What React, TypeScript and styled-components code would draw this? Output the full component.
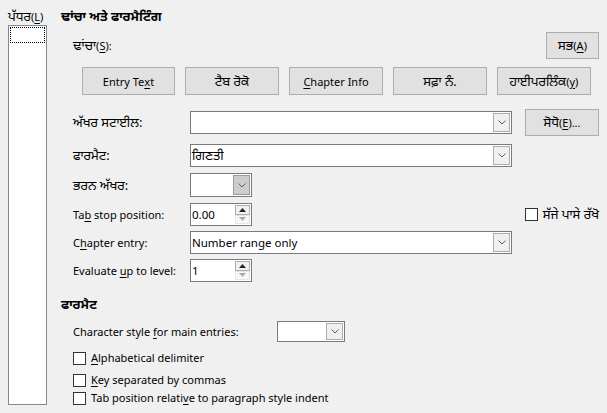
import React from "react";
import styled, { createGlobalStyle } from "styled-components";

const Global = createGlobalStyle`
  html, body { margin: 0; padding: 0; }
  body {
    background: #f0f0f0;
    font-family: "Noto Sans", "Noto Sans Gurmukhi", "Open Sans", sans-serif;
    font-size: 11px;
    color: #000;
  }
  u { text-underline-offset: 2px; }
`;

const Pa = styled.span`
  font-size: 13px;
`;

const Page = styled.div`
  width: 607px;
  height: 413px;
  display: flex;
  background: #f0f0f0;
  overflow: hidden;
`;

const LeftCol = styled.div`
  margin-left: 8px;
  width: 39px;
  display: flex;
  flex-direction: column;
`;

const Label = styled.div<{ $w?: number }>`
  line-height: 16px;
  white-space: nowrap;
  ${(p) => (p.$w ? `width: ${p.$w}px; flex: none;` : "")}
`;

const TopLabel = styled(Label)`
  margin-top: 8px;
`;

const ListBox = styled.div`
  height: 380px;
  background: #fff;
  border: 1px solid #828790;
  box-sizing: border-box;
  padding: 1px;
`;

const FocusItem = styled.div`
  height: 14px;
  border: 1px dotted #000;
`;

const MainCol = styled.div`
  margin-left: 14px;
  width: 538px;
  display: flex;
  flex-direction: column;
`;

const SectionTitle = styled.div<{ $top: number }>`
  margin-top: ${(p) => p.$top}px;
  font-weight: bold;
  line-height: 16px;
`;

const Row = styled.div<{ $top: number; $indent?: number; $h?: number }>`
  margin-top: ${(p) => p.$top}px;
  padding-left: ${(p) => p.$indent ?? 12}px;
  height: ${(p) => p.$h ?? 23}px;
  display: flex;
  align-items: center;
`;

const Spacer = styled.div`
  flex: 1;
`;

const Button = styled.div<{ $w: number; $h?: number }>`
  width: ${(p) => p.$w}px;
  height: ${(p) => p.$h ?? 28}px;
  box-sizing: border-box;
  background: #e1e1e1;
  border: 1px solid #adadad;
  display: flex;
  align-items: center;
  justify-content: center;
  white-space: nowrap;
  flex: none;
`;

const ButtonRow = styled.div`
  margin-top: 8px;
  padding-left: 21px;
  display: flex;
  gap: 10px;
`;

const Field = styled.div<{ $w: number; $h?: number }>`
  width: ${(p) => p.$w}px;
  height: ${(p) => p.$h ?? 23}px;
  box-sizing: border-box;
  background: #fff;
  border: 1px solid #7a7a7a;
  display: flex;
  align-items: stretch;
  flex: none;
`;

const FieldText = styled.div`
  flex: 1;
  padding-left: 1px;
  display: flex;
  align-items: center;
  white-space: nowrap;
  font-size: 11.5px;
`;

const DropBtn = styled.div<{ $dim?: boolean }>`
  width: 17px;
  margin: 1px;
  box-sizing: border-box;
  background: ${(p) => (p.$dim ? "#cccccc" : "#f0f0f0")};
  border: 1px solid ${(p) => (p.$dim ? "#999" : "#adadad")};
  display: flex;
  align-items: center;
  justify-content: center;
`;

const SpinBox = styled.div`
  width: 15px;
  margin: 1px 1px 1px 0;
  display: flex;
  flex-direction: column;
`;

const SpinPart = styled.div<{ $up?: boolean }>`
  flex: 1;
  display: flex;
  align-items: center;
  justify-content: center;
  box-sizing: border-box;
  background: ${(p) => (p.$up ? "#f0f0f0" : "#f7f7f7")};
  border: 1px solid ${(p) => (p.$up ? "#adadad" : "#e6e6e6")};
`;

const Check = styled.div`
  width: 13px;
  height: 13px;
  box-sizing: border-box;
  border: 1px solid #333;
  background: #fff;
  flex: none;
  margin-right: 5px;
`;

const Chevron = () => (
  <svg width="8" height="5" viewBox="0 0 8 5">
    <polyline points="0.5,0.5 4,4 7.5,0.5" fill="none" stroke="#606060" strokeWidth="1" />
  </svg>
);

const Tri = ({ up, color }: { up?: boolean; color: string }) => (
  <svg width="7" height="4" viewBox="0 0 7 4">
    <polygon points={up ? "0,4 7,4 3.5,0" : "0,0 7,0 3.5,4"} fill={color} />
  </svg>
);

const Combo = ({ w, text, dim, h }: { w: number; text?: React.ReactNode; dim?: boolean; h?: number }) => (
  <Field $w={w} $h={h}>
    <FieldText>{text}</FieldText>
    <DropBtn $dim={dim}>
      <Chevron />
    </DropBtn>
  </Field>
);

const Spin = ({ value }: { value: string }) => (
  <Field $w={62}>
    <FieldText>{value}</FieldText>
    <SpinBox>
      <SpinPart $up>
        <Tri up color="#222" />
      </SpinPart>
      <SpinPart>
        <Tri color="#aaa" />
      </SpinPart>
    </SpinBox>
  </Field>
);

export default function App() {
  return (
    <Page>
      <Global />
      <LeftCol>
        <TopLabel>
          <Pa>ਪੱਧਰ</Pa>(<u>L</u>)
        </TopLabel>
        <ListBox>
          <FocusItem />
        </ListBox>
      </LeftCol>
      <MainCol>
        <SectionTitle $top={8}>
          <Pa>ਢਾਂਚਾ ਅਤੇ ਫਾਰਮੈਟਿੰਗ</Pa>
        </SectionTitle>
        <Row $top={7} $h={27}>
          <Label>
            <Pa>ਢਾਂਚਾ</Pa>(<u>S</u>):
          </Label>
          <Spacer />
          <Button $w={53} $h={27}>
            <Pa>ਸਭ</Pa>(<u>A</u>)
          </Button>
        </Row>
        <ButtonRow>
          <Button $w={93}>
            Entry Te<u>x</u>t
          </Button>
          <Button $w={94}>
            <Pa>ਟੈਬ ਰੋਕੋ</Pa>
          </Button>
          <Button $w={94}>
            <u>C</u>hapter Info
          </Button>
          <Button $w={94}>
            <Pa>ਸਫ਼ਾ ਨੰ.</Pa>
          </Button>
          <Button $w={94}>
            <Pa>ਹਾਈਪਰਲਿੰਕ</Pa>(<u>y</u>)
          </Button>
        </ButtonRow>
        <Row $top={16}>
          <Label $w={117}>
            <Pa>ਅੱਖਰ ਸਟਾਈਲ:</Pa>
          </Label>
          <Combo w={322} />
          <Spacer />
          <Button $w={74} $h={27}>
            <Pa>ਸੋਧੋ</Pa>(<u>E</u>)...
          </Button>
        </Row>
        <Row $top={10}>
          <Label $w={117}>
            <Pa>ਫਾਰਮੈਟ:</Pa>
          </Label>
          <Combo w={322} text={<Pa>ਗਿਣਤੀ</Pa>} />
        </Row>
        <Row $top={6} $h={24}>
          <Label $w={117}>
            <Pa>ਭਰਨ ਅੱਖਰ:</Pa>
          </Label>
          <Combo w={62} h={24} dim />
        </Row>
        <Row $top={6}>
          <Label $w={117}>
            Ta<u>b</u> stop position:
          </Label>
          <Spin value="0.00" />
          <Spacer />
          <Check />
          <Label>
            <Pa>ਸੱਜੇ ਪਾਸੇ ਰੱਖੋ</Pa>
          </Label>
        </Row>
        <Row $top={5}>
          <Label $w={117}>
            C<u>h</u>apter entry:
          </Label>
          <Combo w={322} text="Number range only" />
        </Row>
        <Row $top={5}>
          <Label $w={117}>
            Evaluate <u>u</u>p to level:
          </Label>
          <Spin value="1" />
        </Row>
        <SectionTitle $top={14}>
          <Pa>ਫਾਰਮੈਟ</Pa>
        </SectionTitle>
        <Row $top={8} $h={21}>
          <Label $w={204}>
            Character style <u>f</u>or main entries:
          </Label>
          <Combo w={68} h={21} />
        </Row>
        <Row $top={5} $h={22}>
          <Check />
          <Label>
            <u>A</u>lphabetical delimiter
          </Label>
        </Row>
        <Row $top={0} $h={22}>
          <Check />
          <Label>
            <u>K</u>ey separated by commas
          </Label>
        </Row>
        <Row $top={0} $h={14}>
          <Check />
          <Label>
            Tab position relati<u>v</u>e to paragraph style indent
          </Label>
        </Row>
      </MainCol>
    </Page>
  );
}
